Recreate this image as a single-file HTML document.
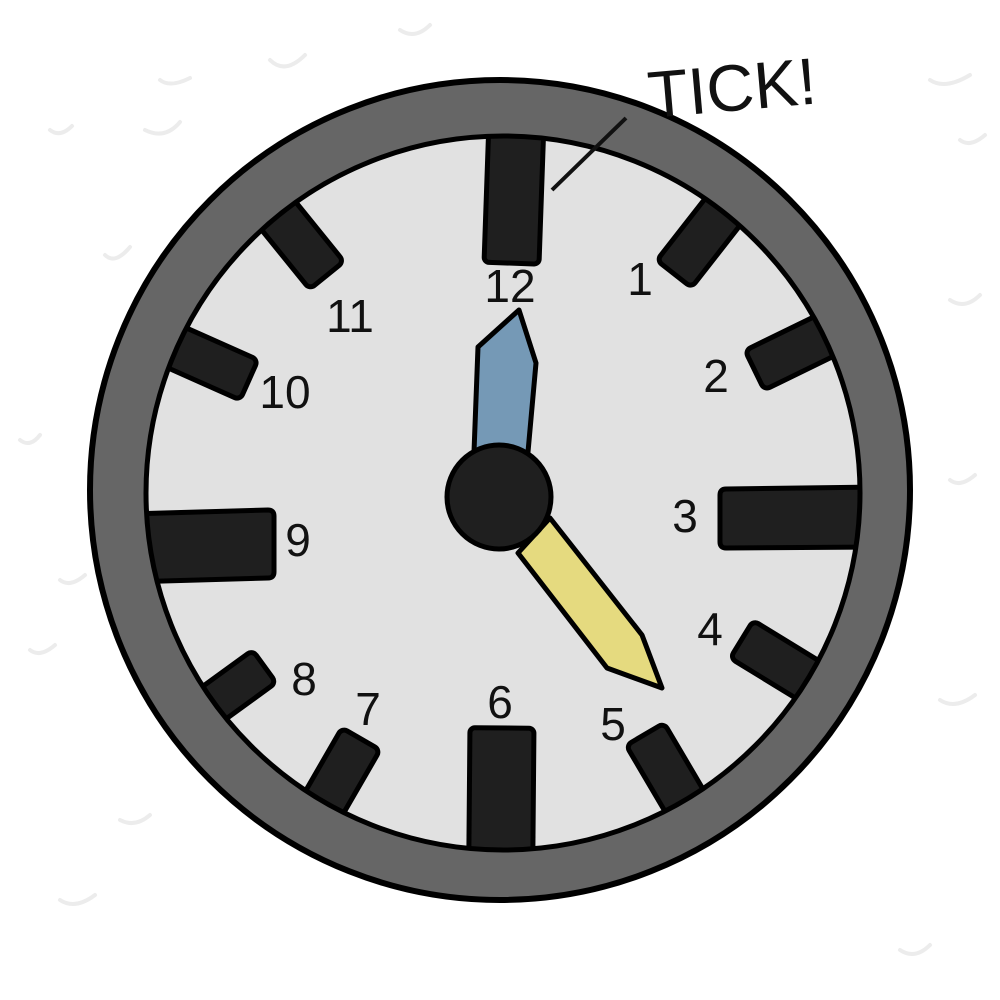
<!DOCTYPE html>
<html><head><style>html,body{margin:0;padding:0;background:#fff}svg{display:block}</style></head><body>
<svg width="1000" height="1000" viewBox="0 0 1000 1000" xmlns="http://www.w3.org/2000/svg">
<defs><clipPath id="f"><circle cx="503" cy="493" r="357"/></clipPath></defs>
<rect width="1000" height="1000" fill="#fff"/>
<g stroke="#ececec" stroke-width="4" fill="none" stroke-linecap="round">
<path d="M105 255 q10 10 25 -8"/><path d="M50 130 q10 8 22 -4"/><path d="M160 80 q10 8 30 -2"/><path d="M145 130 q20 10 35 -8"/><path d="M930 80 q15 10 40 -5"/><path d="M950 300 q15 10 30 -5"/><path d="M30 650 q10 8 25 -5"/><path d="M940 700 q15 10 35 -5"/><path d="M60 900 q15 10 35 -5"/><path d="M900 950 q15 10 30 -5"/><path d="M270 60 q15 15 35 -5"/><path d="M400 30 q15 10 30 -5"/>
<path d="M20 440 q10 8 20 -5"/><path d="M60 580 q10 8 25 -5"/><path d="M120 820 q15 8 30 -5"/><path d="M960 140 q10 8 25 -5"/><path d="M950 480 q10 8 25 -5"/>
</g>
<circle cx="500" cy="490" r="410" fill="#666" stroke="#000" stroke-width="6"/>
<circle cx="503" cy="493" r="357" fill="#e1e1e1"/>
<g clip-path="url(#f)" fill="#1f1f1f" stroke="#000" stroke-width="5" stroke-linejoin="round">
<path d="M130 514 L268 510 Q274 510 274 516 L274 572 Q274 578 268 578 L130 582 Z"/>
<path d="M880 487 L726 489 Q720 489 720 495 L720 542 Q720 548 726 548 L880 547 Z"/>
<g transform="translate(503 493)">
<rect x="-27" y="-380" width="55" height="150" rx="5" transform="rotate(2)"/>
<rect x="-33" y="-380" width="64" height="145" rx="5" transform="rotate(180.5)"/>
<rect x="-22" y="-380" width="44" height="102" rx="6" transform="rotate(38)"/>
<rect x="-22" y="-380" width="44" height="100" rx="6" transform="rotate(64)"/>
<rect x="-22" y="-380" width="44" height="100" rx="6" transform="rotate(121.5)"/>
<rect x="-22" y="-380" width="44" height="100" rx="6" transform="rotate(149.5)"/>
<rect x="-22" y="-380" width="44" height="96" rx="6" transform="rotate(210)"/>
<rect x="-20" y="-380" width="40" height="85" rx="6" transform="rotate(234)"/>
<rect x="-22" y="-380" width="44" height="102" rx="6" transform="rotate(294)"/>
<rect x="-22" y="-380" width="44" height="100" rx="6" transform="rotate(321)"/>
</g></g>
<circle cx="503" cy="493" r="357" fill="none" stroke="#000" stroke-width="5"/>
<g font-family="Liberation Sans, sans-serif" font-size="46" fill="#111" text-anchor="middle">
<text x="510" y="302">12</text><text x="640" y="295">1</text><text x="716" y="392">2</text>
<text x="685" y="532">3</text><text x="710" y="645">4</text><text x="613" y="740">5</text>
<text x="500" y="718">6</text><text x="368" y="725">7</text><text x="304" y="695">8</text>
<text x="298" y="556">9</text><text x="285" y="408">10</text><text x="350" y="332">11</text>
</g>
<text x="650" y="118" font-family="Liberation Sans, sans-serif" font-size="66" fill="#111" transform="rotate(-5 650 118)">TICK!</text>
<path d="M626 118 L552 190" stroke="#111" stroke-width="4"/>
<path d="M478 347 L519 310 L536 363 L528 452 L474 452 Z" fill="#7599b6" stroke="#000" stroke-width="5" stroke-linejoin="round"/>
<path d="M550 518 L642 635 L662 688 L607 668 L518 553 Z" fill="#e5da7f" stroke="#000" stroke-width="5" stroke-linejoin="round"/>
<circle cx="499" cy="497" r="52" fill="#1f1f1f" stroke="#000" stroke-width="5"/>
</svg>
</body></html>
